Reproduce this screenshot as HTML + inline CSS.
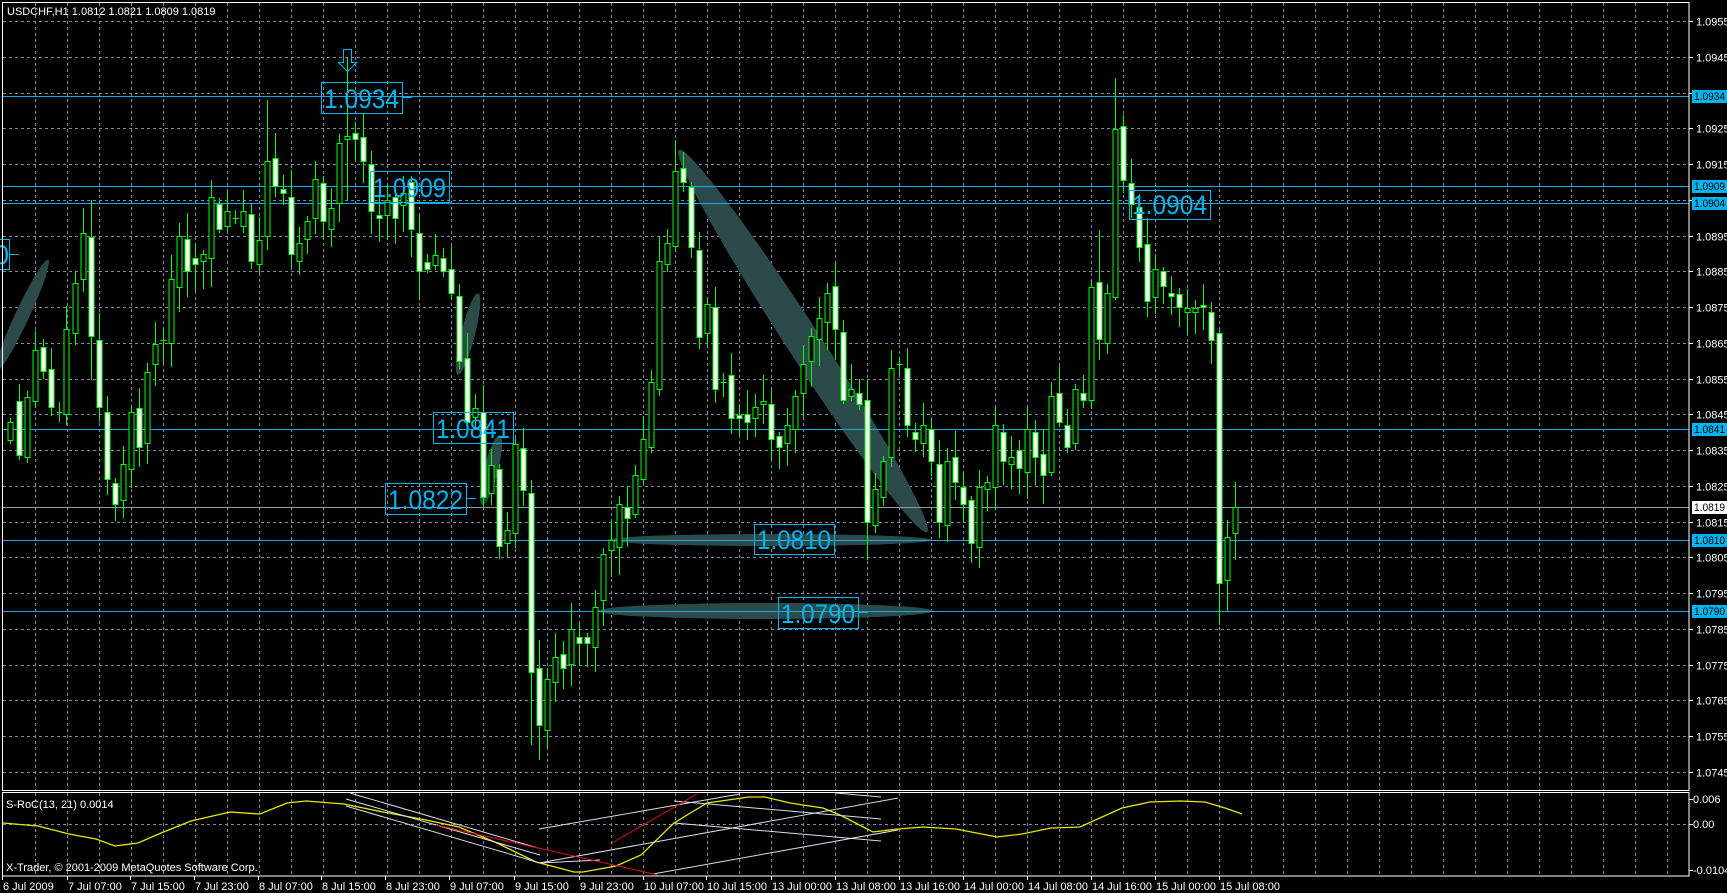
<!DOCTYPE html>
<html><head><meta charset="utf-8">
<style>
html,body{margin:0;padding:0;background:#000;}
body{width:1727px;height:893px;overflow:hidden;}
svg{display:block;}
text{font-family:"Liberation Sans",sans-serif;}
</style></head>
<body>
<svg id="s" width="1727" height="893" xmlns="http://www.w3.org/2000/svg">
<rect width="1727" height="893" fill="#000"/>
<g id="grid"></g>
<g id="shade" fill="#2d4a4a">
  <ellipse cx="22" cy="316" rx="7" ry="62" transform="rotate(25 22 316)"/>
  <ellipse cx="468" cy="334" rx="7" ry="42" transform="rotate(14 468 334)"/>
  <ellipse cx="491" cy="470" rx="7" ry="36" transform="rotate(14 491 470)"/>
  <ellipse cx="803" cy="341" rx="17" ry="228" transform="rotate(-33 803 341)"/>
  <ellipse cx="770" cy="540" rx="162" ry="6"/>
  <ellipse cx="765" cy="611" rx="168" ry="8"/>
</g>
<g id="hl"></g>
<g id="candles"></g>
<g id="labels"></g>
<g id="sub"></g>
<g id="axis" font-size="11" fill="#fff"></g>
</svg>
<script>
var NS="http://www.w3.org/2000/svg";
function el(p,t,a,txt){var e=document.createElementNS(NS,t);for(var k in a)e.setAttribute(k,a[k]);if(txt!=null)e.textContent=txt;document.getElementById(p).appendChild(e);return e;}
function py(p){return 21+(1.0955-p)*35762;}
var G="#7d8b9a";
for(var k=0;k<=51;k++){var x=35+32*k+0.5;
 el("grid","line",{x1:x,y1:3,x2:x,y2:790,stroke:G,"stroke-dasharray":"3,3"});
 el("grid","line",{x1:x,y1:793,x2:x,y2:876,stroke:G,"stroke-dasharray":"3,3"});}
for(var i=0;i<=21;i++){var p=1.0955-i*0.001,y=Math.round(py(p))+0.5;
 el("grid","line",{x1:3,y1:y,x2:1689,y2:y,stroke:G,"stroke-dasharray":"3,3"});
 el("axis","line",{x1:1689,y1:y,x2:1693,y2:y,stroke:"#fff"});
 el("axis","text",{x:1696,y:y+4},p.toFixed(4));}
el("grid","line",{x1:3,y1:824.5,x2:1689,y2:824.5,stroke:G,"stroke-dasharray":"3,3"});
el("axis","rect",{x:2.5,y:2.5,width:1686.5,height:788,fill:"none",stroke:"#fff"});
el("axis","rect",{x:2.5,y:792.5,width:1686.5,height:83.5,fill:"none",stroke:"#fff"});
var CY="#14aae8";
[1.0934,1.0909,1.0904,1.0841,1.0810,1.0790].forEach(function(p){var y=Math.round(py(p))+0.5;
 el("hl","line",{x1:3,y1:y,x2:1689,y2:y,stroke:CY});});
el("hl","line",{x1:3,y1:507.5,x2:1689,y2:507.5,stroke:"#8a9aa8"});
var C=[[10,422,440,0],[19,401,455,1],[27,397,457,0],[35,350,401,0],[43,347,371,1],[51,369,407,1],[59,412,412,2],[66,329,414,0],[75,283,333,0],[83,233,279,0],[91,237,336,1],[99,340,407,1],[107,412,479,1],[115,483,504,1],[123,464,500,0],[131,412,469,0],[139,408,447,1],[147,372,443,0],[155,344,364,0],[163,340,340,2],[171,279,343,0],[179,236,287,0],[187,239,271,1],[195,258,264,1],[203,254,261,0],[211,197,258,0],[219,204,229,1],[227,211,226,0],[235,218,218,2],[243,211,226,0],[251,214,261,1],[259,240,264,0],[267,161,236,0],[275,158,186,1],[283,189,193,1],[291,197,254,1],[299,243,261,0],[307,221,239,0],[315,179,218,0],[323,183,221,1],[331,208,229,0],[339,143,203,0],[347,136,139,0],[355,133,139,1],[363,137,161,1],[371,164,211,1],[379,215,218,1],[387,200,215,0],[395,197,218,1],[403,193,205,0],[411,182,229,1],[419,233,271,1],[427,262,269,1],[435,255,265,0],[443,258,271,1],[451,269,293,1],[459,296,361,1],[467,358,422,1],[475,408,417,0],[483,412,497,1],[491,465,493,0],[499,469,546,1],[507,530,543,0],[515,444,533,0],[523,448,490,1],[531,493,672,1],[539,668,725,1],[547,679,730,0],[555,657,682,0],[563,654,668,1],[571,629,664,0],[579,637,643,1],[587,637,643,1],[595,607,647,0],[603,554,600,0],[611,540,550,0],[619,504,547,0],[627,507,518,1],[635,475,514,0],[643,439,479,0],[651,382,447,0],[659,261,389,0],[667,243,264,0],[675,171,246,0],[683,168,182,1],[691,187,247,1],[699,250,337,1],[707,304,333,0],[715,307,389,1],[723,382,382,2],[731,375,418,1],[739,415,418,1],[747,414,422,1],[755,407,418,0],[763,401,404,0],[771,404,439,1],[779,436,447,1],[787,425,443,0],[795,396,429,0],[803,364,393,0],[811,336,361,0],[819,318,339,0],[827,293,322,0],[835,286,329,1],[843,332,400,1],[851,389,396,0],[859,393,404,1],[867,400,522,1],[875,489,525,0],[883,461,497,0],[891,368,457,0],[899,364,364,2],[907,368,425,1],[915,432,439,1],[923,425,443,0],[931,429,461,1],[939,464,522,1],[947,461,525,0],[955,457,482,1],[963,487,504,1],[971,500,543,1],[979,487,547,0],[987,482,489,0],[995,425,487,0],[1003,432,461,1],[1011,457,464,0],[1019,450,468,1],[1027,429,472,0],[1035,432,457,1],[1043,454,475,1],[1051,396,472,0],[1059,393,422,1],[1067,425,447,1],[1075,389,443,0],[1083,393,400,1],[1091,287,400,0],[1099,282,339,1],[1107,293,343,0],[1115,129,297,0],[1123,126,180,1],[1131,183,204,1],[1139,207,247,1],[1147,244,301,1],[1155,269,297,0],[1163,271,286,1],[1171,293,296,1],[1179,294,307,1],[1187,308,312,0],[1195,308,312,0],[1203,305,307,1],[1211,312,340,1],[1219,333,583,1],[1227,537,580,0],[1235,507,533,0]];
var OV={347:[58,200],531:[480,745],539:[640,760],1115:[78,300],1219:[330,625],1227:[520,612],1099:[230,360],867:[380,560],675:[140,250],267:[100,250],91:[200,380]};
C.forEach(function(c,i){var x=c[0]+0.5,t=c[1],b=c[2];var h=t-(4+(i*37)%24),l=b+(4+(i*53)%26);
 if(OV[c[0]]){h=OV[c[0]][0];l=OV[c[0]][1];}
 el("candles","line",{x1:x,y1:h,x2:x,y2:l,stroke:"#00ff00"});
 if(c[3]==2){el("candles","line",{x1:x-3,y1:t+0.5,x2:x+3,y2:t+0.5,stroke:"#00ff00"});}
 else{if(b-t<2)b=t+2;el("candles","rect",{x:x-2.5,y:t+0.5,width:5,height:b-t,fill:c[3]==1?"#fff":"#000",stroke:"#00ff00"});}
});
function lab(x1,y1,x2,y2,t,tick){el("labels","rect",{x:x1+0.5,y:y1+0.5,width:x2-x1,height:y2-y1,fill:"none",stroke:"#00b4f0"});
 el("labels","text",{x:x1+3,y:y2-5,"font-size":"27",fill:"#00b4f0","textLength":x2-x1-6,"lengthAdjust":"spacingAndGlyphs"},t);
 if(tick)el("labels","line",{x1:x2,y1:(y1+y2)/2,x2:tick,y2:(y1+y2)/2,stroke:"#00b4f0"});}
lab(321,82,402,113,"1.0934",412);
lab(370,171,449,202,"1.0909");
lab(433,412,513,443,"1.0841");
lab(385,483,466,514,"1.0822",476);
lab(754,524,834,554,"1.0810");
lab(778,597,858,628,"1.0790",868);
lab(1129,190,1210,219,"1.0904");
el("labels","rect",{x:-20.5,y:239.5,width:30,height:30,fill:"none",stroke:"#00b4f0"});
el("labels","text",{x:-6,y:264,"font-size":"27",fill:"#00b4f0"},"0");
el("labels","line",{x1:10,y1:254.5,x2:19,y2:254.5,stroke:"#00b4f0"});
el("labels","path",{d:"M343.5 49.5 H351.5 V62.5 H356.5 L347.5 71.5 L338.5 62.5 H343.5 Z",fill:"none",stroke:"#00b4f0"});
function tag(p,bg){var y=Math.round(py(p));el("axis","rect",{x:1692,y:y-6,width:35,height:13,fill:bg});
 el("axis","text",{x:1694,y:y+4,fill:"#000","textLength":31,"lengthAdjust":"spacingAndGlyphs"},p.toFixed(4));}
[1.0934,1.0909,1.0904,1.0841,1.0810,1.0790].forEach(function(p){tag(p,"#00b4f0");});
tag(1.0819,"#fff");
el("axis","text",{x:7,y:15},"USDCHF,H1  1.0812 1.0821 1.0809 1.0819");
var Y=[[3,823],[38,826],[69,834],[96,839],[115,846],[138,843],[161,833],[191,821],[230,812],[260,814],[287,803],[306,801],[344,804],[383,812],[421,819],[459,827],[497,843],[536,862],[574,872],[583,872],[616,866],[641,855],[674,823],[707,803],[749,797],[765,797],[790,803],[823,808],[840,815],[873,832],[898,829],[923,827],[956,829],[997,837],[1022,834],[1051,828],[1080,827],[1122,808],[1150,802],[1180,801],[1205,802],[1225,808],[1242,814]];
el("sub","polyline",{points:Y.map(function(p){return p.join(",");}).join(" "),fill:"none",stroke:"#e8e800","stroke-width":1.3});
var W=[[350,793,538,848],[346,799,540,855],[346,806,540,863],[539,829,740,794],[539,863,898,798],[653,874,898,830],[674,801,881,819],[674,823,881,841],[836,793,881,797],[540,863,600,860]];
W.forEach(function(l){el("sub","line",{x1:l[0],y1:l[1],x2:l[2],y2:l[3],stroke:"#d8dde8"});});
[[436,825,658,875],[612,843,697,794]].forEach(function(l){el("sub","line",{x1:l[0],y1:l[1],x2:l[2],y2:l[3],stroke:"#e01010"});});
el("axis","text",{x:6,y:808},"S-RoC(13, 21) 0.0014");
el("axis","text",{x:6,y:871},"X-Trader, © 2001-2009 MetaQuotes Software Corp.");
[[799,"0.006"],[824,"0.00"],[870,"-0.0104"]].forEach(function(a){el("axis","line",{x1:1689,y1:a[0]+0.5,x2:1693,y2:a[0]+0.5,stroke:"#fff"});el("axis","text",{x:1693,y:a[0]+4},a[1]);});
var T=[[2,"6 Jul 2009"],[67,"7 Jul 07:00"],[130,"7 Jul 15:00"],[194,"7 Jul 23:00"],[258,"8 Jul 07:00"],[321,"8 Jul 15:00"],[385,"8 Jul 23:00"],[449,"9 Jul 07:00"],[514,"9 Jul 15:00"],[579,"9 Jul 23:00"],[643,"10 Jul 07:00"],[706,"10 Jul 15:00"],[771,"13 Jul 00:00"],[835,"13 Jul 08:00"],[899,"13 Jul 16:00"],[963,"14 Jul 00:00"],[1027,"14 Jul 08:00"],[1091,"14 Jul 16:00"],[1155,"15 Jul 00:00"],[1219,"15 Jul 08:00"]];
T.forEach(function(t){el("axis","line",{x1:t[0]+0.5,y1:876,x2:t[0]+0.5,y2:880,stroke:"#fff"});el("axis","text",{x:t[0]+1,y:890},t[1]);});
</script>
</body></html>
